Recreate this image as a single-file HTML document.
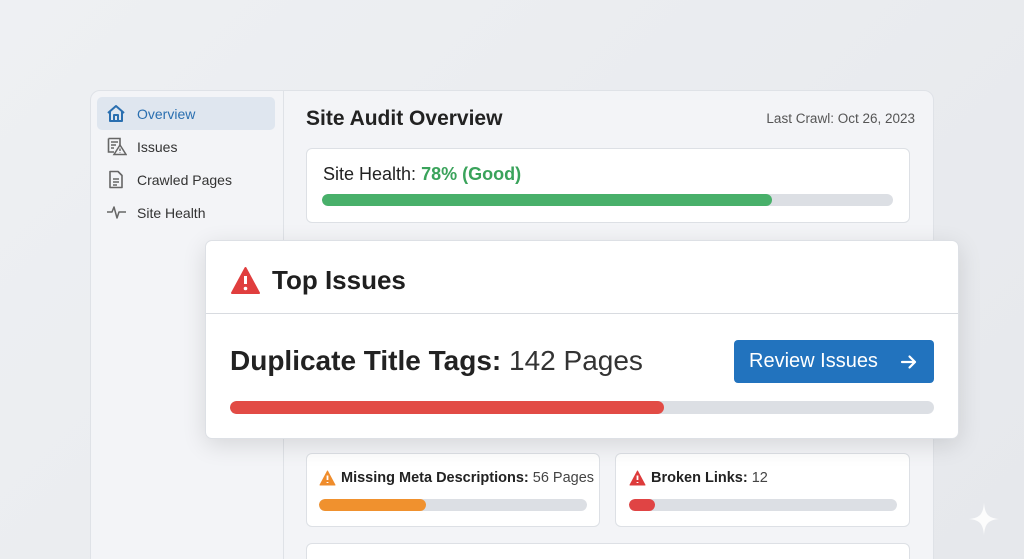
<!DOCTYPE html>
<html style="width:1024px;height:559px;overflow:hidden"><head><meta charset="utf-8"><style>
*{margin:0;padding:0;box-sizing:border-box}
body{width:1024px;height:559px;overflow:hidden;background:linear-gradient(135deg,#eef0f3,#e6e8ec);font-family:"Liberation Sans",sans-serif;position:relative;color:#222}
.abs{position:absolute}
.panel{left:90px;top:90px;width:844px;height:480px;background:#f3f4f7;border:1px solid #dfe2e7;border-radius:10px}
.side{left:90px;top:90px;width:194px;height:469px;border-right:1px solid #dfe2e7}
.hl{left:97px;top:97px;width:178px;height:33px;background:#dfe6ef;border-radius:5px}
.nav{left:137px;font-size:14px;color:#333;line-height:16px}
.card{background:#fff;border:1px solid #dde0e5;border-radius:6px}
.bar{background:#dcdfe4;border-radius:7px;overflow:hidden}
.bar div{height:100%;border-radius:7px}
</style></head><body>
<div class="abs panel"></div>
<div class="abs side"></div>
<div class="abs hl"></div>
<svg class="abs" style="left:106px;top:104px" width="20" height="19" viewBox="0 0 20 19"><path d="M2 9 L10 2 L18 9 M4 7.5 V17 H16 V7.5 M8 17 V11 H12 V17" fill="none" stroke="#2a6fb0" stroke-width="2" stroke-linejoin="round"/></svg>
<svg class="abs" style="left:107px;top:137px" width="20" height="19" viewBox="0 0 20 19"><path d="M1.5 1.5 H13 V8 M1.5 1.5 V15 H7 M4 5 H11 M4 8 H9 M4 11 H7" fill="none" stroke="#666" stroke-width="1.6"/><path d="M13 8 L19 17.5 H7 Z" fill="none" stroke="#666" stroke-width="1.5"/><path d="M13 11.5 V14 M13 15.5 V16" stroke="#666" stroke-width="1.4"/></svg>
<svg class="abs" style="left:108px;top:170px" width="16" height="19" viewBox="0 0 16 19"><path d="M2 1.5 H10 L14 5.5 V17.5 H2 Z M5 9 H11 M5 12 H11 M5 15 H9" fill="none" stroke="#666" stroke-width="1.6" stroke-linejoin="round"/></svg>
<svg class="abs" style="left:106px;top:203px" width="22" height="18" viewBox="0 0 22 18"><path d="M1 9 H6 L8 4 L11 15 L13 9 H20" fill="none" stroke="#666" stroke-width="1.5" stroke-linejoin="round"/></svg>
<div class="abs nav" style="top:106px;color:#2a6fb0">Overview</div>
<div class="abs nav" style="top:139px">Issues</div>
<div class="abs nav" style="top:172px">Crawled Pages</div>
<div class="abs nav" style="top:205px">Site Health</div>
<div class="abs" style="left:306px;top:107px;font-size:21px;font-weight:bold;color:#222">Site Audit Overview</div>
<div class="abs" style="right:109px;top:111px;font-size:13.5px;color:#555">Last Crawl: Oct 26, 2023</div>
<div class="abs card" style="left:306px;top:148px;width:604px;height:75px"></div>
<div class="abs" style="left:323px;top:164px;font-size:18px;color:#222">Site Health: <span style="color:#3aa35b;font-weight:bold">78% (Good)</span></div>
<div class="abs bar" style="left:322px;top:194px;width:571px;height:12px"><div style="width:450px;background:#48b06a"></div></div>
<div class="abs card" style="left:306px;top:453px;width:294px;height:74px"></div>
<div class="abs card" style="left:615px;top:453px;width:295px;height:74px"></div>
<div class="abs card" style="left:306px;top:543px;width:604px;height:40px"></div>
<svg class="abs" style="left:319px;top:470px" width="17" height="16" viewBox="0 0 17 16"><path d="M8.5 1 L16 15 H1 Z" fill="#ef8c2b" stroke="#ef8c2b" stroke-linejoin="round"/><path d="M8.5 5.5 V10 M8.5 12 V13" stroke="#fff" stroke-width="1.8"/></svg>
<div class="abs" style="left:341px;top:470px;font-size:14.5px"><b>Missing Meta Descriptions:</b> <span style="color:#444">56 Pages</span></div>
<div class="abs bar" style="left:319px;top:499px;width:268px;height:12px"><div style="width:107px;background:#f0912e"></div></div>
<svg class="abs" style="left:629px;top:470px" width="17" height="16" viewBox="0 0 17 16"><path d="M8.5 1 L16 15 H1 Z" fill="#dd3b3b" stroke="#dd3b3b" stroke-linejoin="round"/><path d="M8.5 5.5 V10 M8.5 12 V13" stroke="#fff" stroke-width="1.8"/></svg>
<div class="abs" style="left:651px;top:470px;font-size:14.5px"><b>Broken Links:</b> <span style="color:#444">12</span></div>
<div class="abs bar" style="left:629px;top:499px;width:268px;height:12px"><div style="width:26px;background:#e04444"></div></div>
<div class="abs card" style="left:205px;top:240px;width:754px;height:199px;box-shadow:0 6px 24px rgba(0,0,0,.12);border-radius:7px"></div>
<svg class="abs" style="left:230px;top:266px" width="31" height="29" viewBox="0 0 31 29"><path d="M15.5 2 L29 27 H2 Z" fill="#e03e3e" stroke="#e03e3e" stroke-width="2" stroke-linejoin="round"/><path d="M15.5 10 V18" stroke="#fff" stroke-width="3"/><circle cx="15.5" cy="22.5" r="1.8" fill="#fff"/></svg>
<div class="abs" style="left:272px;top:265px;font-size:26px;font-weight:bold;color:#1f1f1f">Top Issues</div>
<div class="abs" style="left:206px;top:313px;width:752px;height:1px;background:#d8dbe0"></div>
<div class="abs" style="left:230px;top:345px;font-size:28px;color:#222"><b>Duplicate Title Tags:</b> <span style="color:#333">142 Pages</span></div>
<div class="abs" style="left:734px;top:340px;width:200px;height:43px;background:#2273be;border-radius:4px;color:#fff;font-size:20px;line-height:43px;padding-left:15px">Review Issues</div>
<svg class="abs" style="left:899px;top:352px" width="20" height="20" viewBox="0 0 20 20"><path d="M3 10 H16 M10.5 4.5 L16 10 L10.5 15.5" fill="none" stroke="#fff" stroke-width="2.2" stroke-linecap="round" stroke-linejoin="round"/></svg>
<div class="abs bar" style="left:230px;top:401px;width:704px;height:13px"><div style="width:434px;background:#e24b45"></div></div>
<svg class="abs" style="left:968px;top:502px" width="32" height="34" viewBox="0 0 32 34"><path d="M16 1 C17 12 20 16 31 17 C20 18 17 22 16 33 C15 22 12 18 1 17 C12 16 15 12 16 1Z" fill="#fff" opacity=".85"/></svg>
</body></html>
